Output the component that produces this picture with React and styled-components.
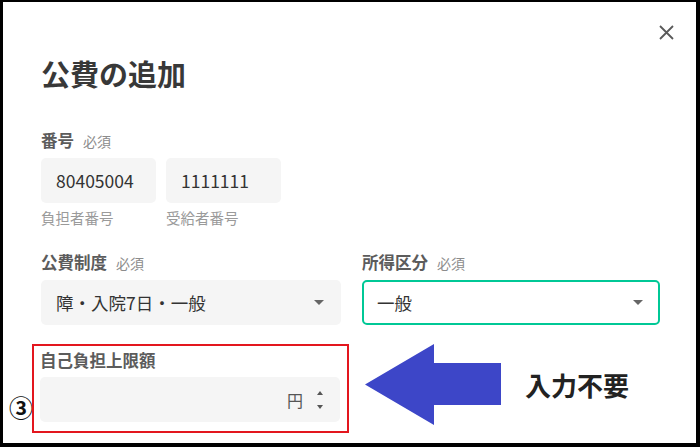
import React from "react";
import styled, { createGlobalStyle } from "styled-components";

const GlobalStyle = createGlobalStyle`
  html, body {
    margin: 0;
    padding: 0;
    background: #fff;
  }
  body {
    font-family: "Noto Sans CJK JP", "Noto Sans", sans-serif;
  }
`;

const Frame = styled.div`
  box-sizing: border-box;
  width: 700px;
  height: 447px;
  overflow: hidden;
  background: #fff;
  border-style: solid;
  border-color: #000;
  border-width: 2px 4px 4px 3px;
  padding: 0 36px 0 38px;
`;

const TopBar = styled.div`
  display: flex;
  justify-content: flex-end;
  padding-top: 16px;
  margin-right: -20px;
`;

const CloseButton = styled.button`
  width: 28px;
  height: 28px;
  padding: 0;
  border: none;
  background: none;
  display: flex;
  align-items: center;
  justify-content: center;
  cursor: pointer;
`;

const Title = styled.h1`
  margin: 7px 0 0;
  font-size: 29px;
  line-height: 40px;
  font-weight: 700;
  color: #383838;
`;

const Section = styled.div`
  margin-top: ${(p) => p.$top || 0}px;
`;

const Label = styled.div`
  display: flex;
  align-items: baseline;
  gap: 9px;
  font-size: 16.5px;
  line-height: 24px;
  font-weight: 700;
  color: #5c5c5c;
  margin-bottom: 5px;
`;

const Required = styled.span`
  font-size: 14px;
  font-weight: 400;
  color: #8c8c8c;
`;

const NumberRow = styled.div`
  display: flex;
  gap: 10px;
`;

const NumberField = styled.div`
  width: 115px;
`;

const Box = styled.div`
  box-sizing: border-box;
  height: 45px;
  border-radius: 5px;
  background: ${(p) => (p.$focused ? "#fff" : "#f5f5f5")};
  border: ${(p) => (p.$focused ? "2px solid #00c896" : "none")};
  display: flex;
  align-items: center;
  padding: 0 ${(p) => (p.$focused ? 15 : 17)}px 0 ${(p) => (p.$focused ? 13 : 15)}px;
  font-size: 17.5px;
  color: #333;
`;

const BoxText = styled.span`
  flex: 1;
`;

const Helper = styled.div`
  margin-top: 5px;
  font-size: 14.5px;
  line-height: 20px;
  color: #9a9a9a;
`;

const Grid = styled.div`
  display: grid;
  grid-template-columns: 300px 298px;
  column-gap: 21px;
`;

const Unit = styled.span`
  font-size: 16px;
  color: #555;
  margin-right: 14px;
`;

const Spin = styled.div`
  display: flex;
  flex-direction: column;
  gap: 10px;
`;

const AnnotationRow = styled.div`
  display: flex;
  align-items: flex-start;
  margin-top: 19px;
  margin-left: -31px;
`;

const Marker = styled.div`
  width: 23px;
  align-self: flex-end;
  margin-bottom: 13px;
  font-size: 24px;
  line-height: 26px;
  font-weight: 700;
  color: #111;
  text-align: left;
  margin-left: -1px;
`;

const Highlight = styled.div`
  box-sizing: border-box;
  width: 317px;
  border: 2px solid #e3161e;
  padding: 2px 7px 9px 6px;
`;

const Arrow = styled.svg`
  margin-left: 16px;
  flex-shrink: 0;
`;

const Note = styled.div`
  margin: 24px 0 0 24px;
  font-size: 26px;
  line-height: 34px;
  font-weight: 700;
  color: #222;
`;

const Caret = () => (
  <svg width="10" height="5" viewBox="0 0 10 5">
    <path d="M0 0 L10 0 L5 5 Z" fill="#666" />
  </svg>
);

function App() {
  return (
    <>
      <GlobalStyle />
      <Frame>
        <TopBar>
          <CloseButton aria-label="close">
            <svg width="15" height="15" viewBox="0 0 15 15">
              <path d="M1 1 L14 14 M14 1 L1 14" stroke="#5a5a5a" strokeWidth="1.8" />
            </svg>
          </CloseButton>
        </TopBar>
        <Title>公費の追加</Title>

        <Section $top={35}>
          <Label>
            番号<Required>必須</Required>
          </Label>
          <NumberRow>
            <NumberField>
              <Box>80405004</Box>
              <Helper>負担者番号</Helper>
            </NumberField>
            <NumberField>
              <Box>1111111</Box>
              <Helper>受給者番号</Helper>
            </NumberField>
          </NumberRow>
        </Section>

        <Section $top={22}>
          <Grid>
            <div>
              <Label>
                公費制度<Required>必須</Required>
              </Label>
              <Box>
                <BoxText>障・入院7日・一般</BoxText>
                <Caret />
              </Box>
            </div>
            <div>
              <Label>
                所得区分<Required>必須</Required>
              </Label>
              <Box $focused>
                <BoxText>一般</BoxText>
                <Caret />
              </Box>
            </div>
          </Grid>
        </Section>

        <AnnotationRow>
          <Marker>③</Marker>
          <Highlight>
            <Label>自己負担上限額</Label>
            <Box>
              <BoxText />
              <Unit>円</Unit>
              <Spin>
                <svg width="6" height="4" viewBox="0 0 6 4">
                  <path d="M0 4 L6 4 L3 0 Z" fill="#555" />
                </svg>
                <svg width="6" height="4" viewBox="0 0 6 4">
                  <path d="M0 0 L6 0 L3 4 Z" fill="#555" />
                </svg>
              </Spin>
            </Box>
          </Highlight>
          <Arrow width="136" height="81" viewBox="0 0 136 81">
            <path d="M0 40.5 L69 0 L69 19 L136 19 L136 61 L69 61 L69 81 Z" fill="#3d46c8" />
          </Arrow>
          <Note>入力不要</Note>
        </AnnotationRow>
      </Frame>
    </>
  );
}

export default App;
